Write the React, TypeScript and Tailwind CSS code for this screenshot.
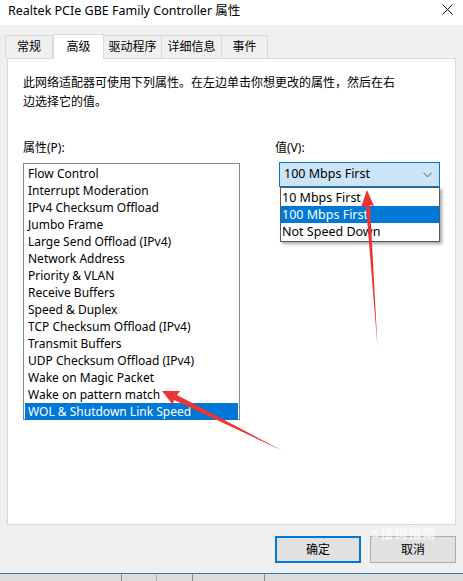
import React from 'react';

const FONT = "font-['Noto_Sans','Noto_Sans_CJK_SC',sans-serif]";

const properties = [
    'Flow Control',
    'Interrupt Moderation',
    'IPv4 Checksum Offload',
    'Jumbo Frame',
    'Large Send Offload (IPv4)',
    'Network Address',
    'Priority & VLAN',
    'Receive Buffers',
    'Speed & Duplex',
    'TCP Checksum Offload (IPv4)',
    'Transmit Buffers',
    'UDP Checksum Offload (IPv4)',
    'Wake on Magic Packet',
    'Wake on pattern match',
    'WOL & Shutdown Link Speed',
];

const options = ['10 Mbps First', '100 Mbps First', 'Not Speed Down'];

const tabs = [
    { label: '常规', w: 'w-[48px]' },
    { label: '高级', w: 'w-[51px]', active: true },
    { label: '驱动程序', w: 'w-[58px]' },
    { label: '详细信息', w: 'w-[60px]' },
    { label: '事件', w: 'w-[46px]' },
];

export default function App() {
    return (
        <div className={`relative w-[463px] h-[581px] overflow-hidden bg-[#f0f0f0] text-black ${FONT}`}>
            {/* Title bar */}
            <div className="h-[25px] bg-white flex items-center justify-between pl-[8px] pr-[10px]">
                <span className="text-[12.5px] leading-none mt-[-3px]">Realtek PCIe GBE Family Controller 属性</span>
                <svg width="11" height="11" viewBox="0 0 11 11" className="mt-[-6px]">
                    <path d="M0.5 0.5 L10.5 10.5 M10.5 0.5 L0.5 10.5" stroke="#111" strokeWidth="1" />
                </svg>
            </div>

            {/* Tabs */}
            <div className="flex items-end pl-[5px] h-[33px]">
                {tabs.map((t) =>
                    t.active ? (
                        <div
                            key={t.label}
                            className={`${t.w} h-[25px] bg-white border border-b-0 border-[#d9d9d9] relative z-10 -mb-px text-[12px] flex items-start justify-center pt-[3px]`}
                        >
                            {t.label}
                        </div>
                    ) : (
                        <div
                            key={t.label}
                            className={`${t.w} h-[23px] bg-[#f0f0f0] border border-b-0 border-l-0 first:border-l border-[#d9d9d9] text-[12px] flex items-center justify-center`}
                        >
                            {t.label}
                        </div>
                    )
                )}
            </div>

            {/* Panel */}
            <div className="mx-[7px] h-[467px] bg-white border border-[#d9d9d9] pt-[14px] pl-[15px]">
                <p className="w-[380px] text-[12px] leading-[19px]">
                    此网络适配器可使用下列属性。在左边单击你想更改的属性，然后在右边选择它的值。
                </p>

                <div className="flex mt-[29px]">
                    {/* Property list */}
                    <div className="w-[217px]">
                        <div className="text-[12px] leading-[16px] mb-[7px]">属性(P):</div>
                        <div className="h-[257px] border border-[#828790] pt-[1px] px-[1px]">
                            {properties.map((p, i) => (
                                <div
                                    key={p}
                                    className={`h-[17px] pl-[3px] text-[12px] leading-[17px] whitespace-nowrap ${
                                        i === properties.length - 1 ? 'bg-[#0078d7] text-white' : ''
                                    }`}
                                >
                                    {p}
                                </div>
                            ))}
                        </div>
                    </div>

                    {/* Value */}
                    <div className="ml-[35px] w-[165px]">
                        <div className="text-[12px] leading-[16px] mb-[6px]">值(V):</div>
                        <div className="relative ml-[4px] w-[161px]">
                            <div className="h-[25px] border border-[#0078d7] bg-[#cce4f7] flex items-center justify-between pl-[4px] pr-[7px]">
                                <span className="text-[12.5px]">100 Mbps First</span>
                                <svg width="9" height="6" viewBox="0 0 9 6">
                                    <path d="M0.5 0.8 L4.5 4.8 L8.5 0.8" fill="none" stroke="#555" strokeWidth="1" />
                                </svg>
                            </div>
                            <div className="absolute left-[1px] top-[25px] w-[160px] bg-white border border-[#5a5a5a] shadow-[2px_2px_3px_rgba(0,0,0,0.35)] z-10 py-px">
                                {options.map((o, i) => (
                                    <div
                                        key={o}
                                        className={`h-[17px] pl-[1px] text-[12.5px] leading-[17px] ${
                                            i === 1 ? 'bg-[#0078d7] text-white' : ''
                                        }`}
                                    >
                                        {o}
                                    </div>
                                ))}
                            </div>
                        </div>
                    </div>
                </div>
            </div>

            {/* Buttons */}
            <div className="flex justify-end gap-[9px] pr-[7px] mt-[11px]">
                <button className="w-[86px] h-[27px] bg-[#e1e1e1] border-2 border-[#0078d7] text-[12px]">确定</button>
                <button className="w-[86px] h-[27px] bg-[#e1e1e1] border border-[#adadad] text-[12px]">取消</button>
            </div>

            {/* Watermark */}
            <div className="absolute left-[372px] top-[526px] text-[13px] leading-[14px] font-bold text-white/70 tracking-[1px]">S搜狗指南</div>

            {/* Window behind / taskbar strip */}
            <div className="absolute left-0 right-0 top-[573px] h-[8px] border-t border-[#2b78c5] bg-[#dcdcdc] flex">
                <div className="w-[122px] border-r border-[#8a8a8a]" />
                <div className="w-[35px] border-r border-[#b0b0b0]" />
                <div className="w-[36px] border-r border-[#8a8a8a]" />
                <div className="w-[72px] border-r border-[#8a8a8a]" />
            </div>

            {/* Red annotation arrows */}
            <svg className="absolute inset-0 pointer-events-none z-20" width="463" height="581" viewBox="0 0 463 581">
                <polygon points="367,190 374,206 370,205 377.5,347 366,206 361,207" fill="#ee3333" />
                <polygon points="162,391 180,391 177,395 283,451 174,400 173,405" fill="#ee3333" />
            </svg>
        </div>
    );
}
